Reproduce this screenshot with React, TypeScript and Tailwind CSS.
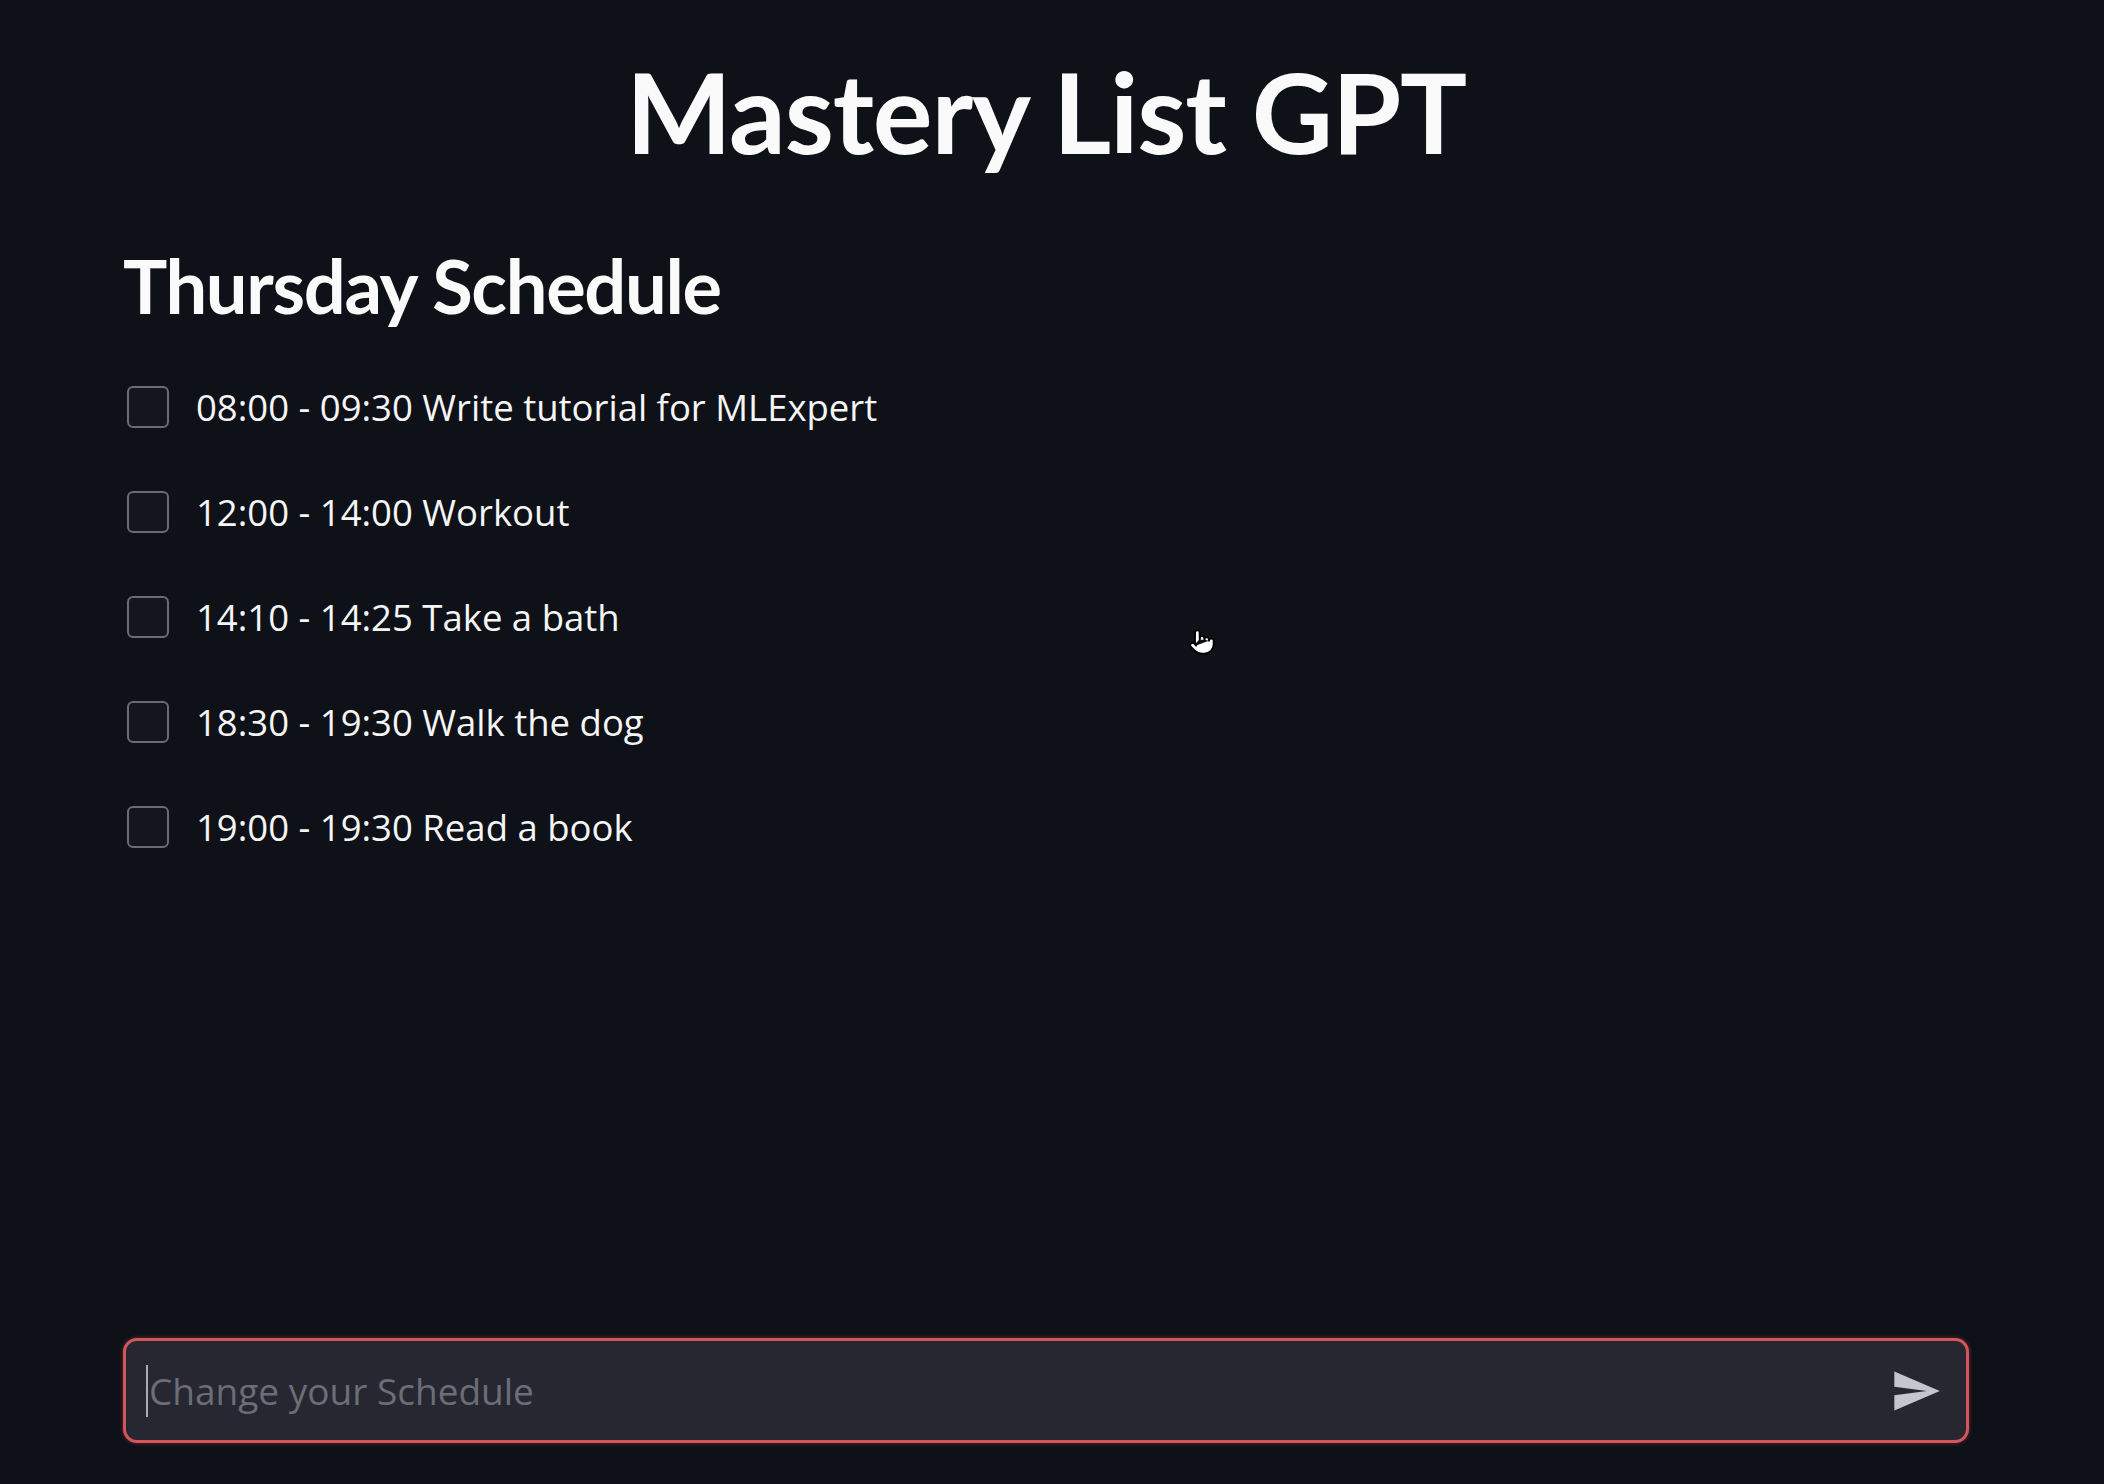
import React from 'react';
import { Pointer } from 'lucide-react';

const tasks = [
  '08:00 - 09:30 Write tutorial for MLExpert',
  '12:00 - 14:00 Workout',
  '14:10 - 14:25 Take a bath',
  '18:30 - 19:30 Walk the dog',
  '19:00 - 19:30 Read a book',
];

// Material "send" glyph
const SendIcon = () => (
  <svg width="52" height="52" viewBox="0 0 24 24" fill="#c4c6cd">
    <path d="M2.01 21L23 12 2.01 3 2 10l15 2-15 2z" />
  </svg>
);

const App: React.FC = () => {
  return (
    <div className="relative min-h-screen w-full bg-[#0e1117] text-[#fafafa] flex flex-col overflow-hidden">
      <div className="ml-[123px] w-[1846px] flex flex-col flex-1">
        <h1 className="mt-[55px] text-center text-[112px] leading-none font-bold font-['Lato',sans-serif] tracking-[-1.2px]">
          Mastery List GPT
        </h1>

        <h2 className="mt-[82px] text-[74px] leading-none font-bold font-['Lato',sans-serif] tracking-[-1.3px]">
          Thursday Schedule
        </h2>

        <ul className="mt-[63px] flex flex-col gap-[63px]">
          {tasks.map((task) => (
            <li key={task} className="flex items-center h-[42px]">
              <span className="ml-[4px] w-[42px] h-[42px] rounded-[6px] border-2 border-[#6a6c74] bg-[#13161d] shrink-0" />
              <span className="ml-[27px] text-[36.5px] leading-none font-medium font-['Open_Sans',sans-serif] text-[#f5f5f5]">
                {task}
              </span>
            </li>
          ))}
        </ul>

        <div className="mt-auto mb-[41px]">
          <div className="h-[105px] rounded-[14px] border-[3px] border-[#d4555b] bg-[#262730] shadow-[0_0_4px_rgba(220,80,85,0.45)] flex items-center pl-[20px] pr-[24px]">
            <span className="w-[2px] h-[52px] bg-[#a9abb2]" />
            <span className="ml-[1px] flex-1 text-[37px] leading-none text-[#6b6d77] font-['Open_Sans',sans-serif]">
              Change your Schedule
            </span>
            <SendIcon />
          </div>
        </div>
      </div>

      {/* mouse pointer */}
      <div className="absolute left-[1188px] top-[628px]">
        <Pointer size={28} fill="#ffffff" stroke="#000000" strokeWidth={1.6} />
      </div>
    </div>
  );
};

export default App;
